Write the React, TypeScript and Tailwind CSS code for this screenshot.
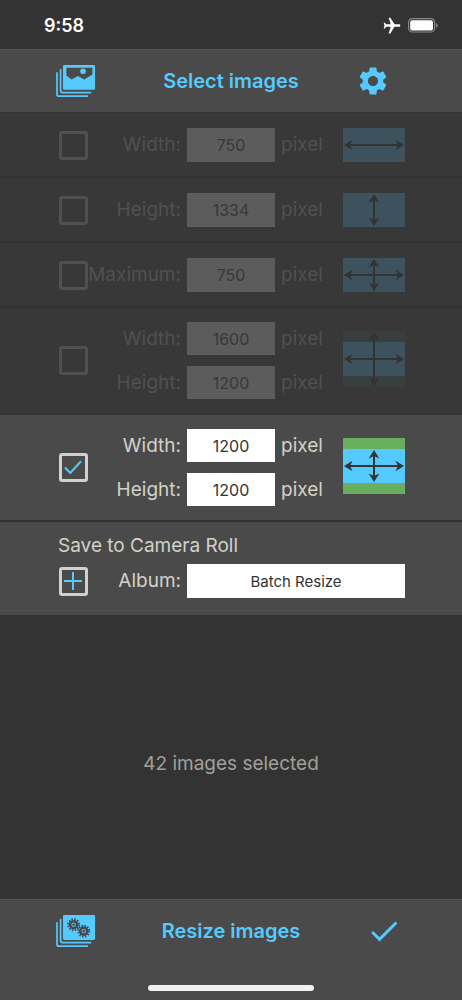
import { useState } from "react";
import type { ReactNode } from "react";
import { MdCheck, MdFlight, MdSettings } from "react-icons/md";

type ArrowKind = "width" | "height" | "maximum" | "fit" | "pad";

type SizeOption = {
  id: ArrowKind;
  fields: { label: string; value: string }[];
};

const OPTIONS: SizeOption[] = [
  { id: "width", fields: [{ label: "Width:", value: "750" }] },
  { id: "height", fields: [{ label: "Height:", value: "1334" }] },
  { id: "maximum", fields: [{ label: "Maximum:", value: "750" }] },
  {
    id: "fit",
    fields: [
      { label: "Width:", value: "1600" },
      { label: "Height:", value: "1200" },
    ],
  },
  {
    id: "pad",
    fields: [
      { label: "Width:", value: "1200" },
      { label: "Height:", value: "1200" },
    ],
  },
];

function StackIcon({ children }: { children: ReactNode }) {
  return (
    <svg width="40" height="33" viewBox="0 0 40 33" fill="none" aria-hidden="true">
      <path d="M1 7.2V29.2Q1 31.2 3 31.2H32" stroke="#55caff" strokeWidth="1.7" />
      <path d="M4.6 4V25.6Q4.6 27.6 6.6 27.6H35.2" stroke="#55caff" strokeWidth="1.7" />
      {children}
    </svg>
  );
}

function PicturesIcon() {
  return (
    <StackIcon>
      <path
        fillRule="evenodd"
        fill="#55caff"
        d="M8.4 0H37.7Q39.1 0 39.1 1.4V23.4Q39.1 24.8 37.7 24.8H8.4Q7 24.8 7 23.4V1.4Q7 0 8.4 0ZM10.4 2.8V10.4L15.6 14.6L21.8 11L28.3 14.6L36.4 9.4V2.8Z"
      />
      <circle cx="27" cy="6.3" r="2.8" fill="#55caff" />
    </StackIcon>
  );
}

function Cog({ cx, cy }: { cx: number; cy: number }) {
  return (
    <g>
      <circle cx={cx} cy={cy} r="5.5" stroke="#484848" strokeWidth="2" strokeDasharray="1.44 1.44" />
      <circle cx={cx} cy={cy} r="3.5" stroke="#484848" strokeWidth="2.6" />
      <circle cx={cx} cy={cy} r="1.3" fill="#484848" />
    </g>
  );
}

function ProcessIcon() {
  return (
    <StackIcon>
      <rect x="7" y="0" width="32.1" height="25" rx="1.4" fill="#55caff" />
      <Cog cx={17.6} cy={9.7} />
      <Cog cx={27.7} cy={16.1} />
    </StackIcon>
  );
}

function HorizontalArrow({ cy }: { cy: number }) {
  return (
    <g fill="#333333">
      <rect x="7" y={cy - 1} width="48" height="2" />
      <g transform={`translate(0 ${cy})`}>
        <path d="M1 0L9.5 -5.3L7 0L9.5 5.3Z" />
        <path d="M61 0L52.5 -5.3L55 0L52.5 5.3Z" />
      </g>
    </g>
  );
}

function VerticalArrow({ top, bottom }: { top: number; bottom: number }) {
  return (
    <g fill="#333333">
      <rect x="30" y={top + 6} width="2" height={bottom - top - 12} />
      <path d={`M31 ${top}L25.7 ${top + 8.5}L31 ${top + 6}L36.3 ${top + 8.5}Z`} />
      <path d={`M31 ${bottom}L25.7 ${bottom - 8.5}L31 ${bottom - 6}L36.3 ${bottom - 8.5}Z`} />
    </g>
  );
}

function ArrowIcon({ kind, active }: { kind: ArrowKind; active: boolean }) {
  const tall = kind === "fit" || kind === "pad";
  const height = tall ? 56 : 34;
  const middle = height / 2;
  const blue = active ? "#55caff" : "#3c525d";
  const bandActive = kind === "pad" ? "#69ad5e" : "#4d6f80";
  const bandIdle = kind === "pad" ? "#404d3f" : "#393e41";
  return (
    <svg
      className={tall ? "mb-1" : ""}
      width="62"
      height={height}
      viewBox={`0 0 62 ${height}`}
      aria-hidden="true"
    >
      {tall && <rect width="62" height="56" fill={active ? bandActive : bandIdle} />}
      <rect y={tall ? 11 : 0} width="62" height="34" fill={blue} />
      {kind !== "height" && <HorizontalArrow cy={middle} />}
      {kind === "fit" && <VerticalArrow top={1} bottom={55} />}
      {(kind === "height" || kind === "maximum") && <VerticalArrow top={1} bottom={33} />}
      {kind === "pad" && <VerticalArrow top={12} bottom={44} />}
    </svg>
  );
}

function OptionRow({
  option,
  active,
  onSelect,
}: {
  option: SizeOption;
  active: boolean;
  onSelect: () => void;
}) {
  const double = option.fields.length > 1;
  return (
    <div
      className={`grid grid-cols-[30px_minmax(0,1fr)_62px] items-center gap-x-1.5 border-b-2 border-[#333] pr-[57px] pb-3.5 pl-[58px] ${
        double ? "pt-3.5" : "pt-[15px]"
      } ${active ? "bg-[#4a4a4a] text-[#d2d2c8]" : "bg-[#383838] text-[#505050]"}`}
    >
      <div className="grid place-items-center">
        <input
          type="checkbox"
          aria-label={`Resize by ${option.id}`}
          checked={active}
          onChange={onSelect}
          className={`col-start-1 row-start-1 size-[29px] appearance-none rounded-[3px] border-3 ${
            active ? "border-[#d0d0d0]" : "border-[#505050]"
          }`}
        />
        {active && (
          <svg
            className="pointer-events-none col-start-1 row-start-1"
            width="18"
            height="16"
            viewBox="0 0 18 16"
            fill="none"
            aria-hidden="true"
          >
            <path d="M1 7.5L6.2 13L17 1.3" stroke="#55caff" strokeWidth="2" />
          </svg>
        )}
      </div>
      <div className={`flex flex-col ${double ? "gap-[11px]" : ""}`}>
        {option.fields.map((field) => {
          const id = `${option.id}-${field.label}`;
          return (
            <div
              key={id}
              className="grid grid-cols-[minmax(0,1fr)_88px_56px] items-center gap-x-1.5 text-[19px] leading-6"
            >
              <label htmlFor={id} className="flex justify-end whitespace-nowrap">
                {field.label}
              </label>
              <input
                id={id}
                type="text"
                inputMode="numeric"
                defaultValue={field.value}
                className={`w-full text-center text-base leading-6 ${double ? "h-[33px]" : "h-[34px]"} ${
                  active ? "bg-white text-[#333]" : "bg-[#5c5c5c] text-[#383838]"
                }`}
              />
              <span>pixel</span>
            </div>
          );
        })}
      </div>
      <ArrowIcon kind={option.id} active={active} />
    </div>
  );
}

export default function App() {
  const [selected, setSelected] = useState<ArrowKind>("pad");

  return (
    <div className="flex min-h-screen flex-col bg-[#333] font-['Inter','Liberation_Sans',sans-serif] text-[#d2d2c8]">
      <div className="flex h-[49px] items-center justify-between pt-0.5 pr-6 pl-11 text-white">
        <span className="text-lg leading-6 font-semibold">9:58</span>
        <div className="flex items-center gap-1.5">
          <MdFlight size={20} className="rotate-90" aria-label="Airplane mode" />
          <svg width="30" height="15" viewBox="0 0 30 15" fill="none" aria-label="Battery full">
            <rect x="0.6" y="0.6" width="26" height="13.4" rx="3.6" stroke="#8a8a8a" strokeWidth="1.2" />
            <rect x="2.2" y="2.2" width="22.8" height="10.2" rx="2" fill="#fff" />
            <path d="M28 5V9.6Q29.7 8.9 29.7 7.3Q29.7 5.7 28 5Z" fill="#8a8a8a" />
          </svg>
        </div>
      </div>

      <header className="grid h-[63px] grid-cols-[1fr_auto_1fr] items-center border-t border-[#555] bg-[#4a4a4a] px-14 text-[#55caff]">
        <button type="button" aria-label="Choose pictures" className="justify-self-start">
          <PicturesIcon />
        </button>
        <button type="button" className="text-xl leading-6 font-semibold">
          Select images
        </button>
        <button type="button" aria-label="Settings" className="justify-self-end pr-4">
          <MdSettings size={34} />
        </button>
      </header>

      <main className="flex flex-1 flex-col">
        <div className="border-t border-[#333]">
          {OPTIONS.map((option) => (
            <OptionRow
              key={option.id}
              option={option}
              active={option.id === selected}
              onSelect={() => setSelected(option.id)}
            />
          ))}
        </div>

        <section className="flex flex-col gap-1.5 bg-[#4a4a4a] pt-3 pr-[57px] pb-[17px] pl-[58px] text-[19px] leading-6">
          <h2>Save to Camera Roll</h2>
          <div className="grid grid-cols-[30px_minmax(0,1fr)_218px] items-center gap-x-1.5">
            <button
              type="button"
              aria-label="Add album"
              className="grid size-[29px] place-items-center justify-self-center rounded-[3px] border-3 border-[#d0d0d0]"
            >
              <svg width="18" height="18" viewBox="0 0 18 18" aria-hidden="true">
                <path d="M9 0V18M0 9H18" stroke="#55caff" strokeWidth="2" />
              </svg>
            </button>
            <label htmlFor="album" className="text-right">
              Album:
            </label>
            <input
              id="album"
              type="text"
              defaultValue="Batch Resize"
              className="h-[34px] w-full bg-white text-center text-[15px] leading-6 text-[#333]"
            />
          </div>
        </section>

        <p className="flex flex-1 items-center justify-center pt-3.5 text-[19px] leading-6 text-[#a0a09a]">
          42 images selected
        </p>
      </main>

      <footer className="border-t border-[#555] bg-[#4a4a4a] text-[#55caff]">
        <div className="grid h-[62px] grid-cols-[1fr_auto_1fr] items-center px-14">
          <button type="button" aria-label="Process pictures" className="justify-self-start">
            <ProcessIcon />
          </button>
          <button type="button" className="text-xl leading-6 font-semibold">
            Resize images
          </button>
          <button type="button" aria-label="Confirm" className="justify-self-end pr-1">
            <MdCheck size={36} />
          </button>
        </div>
        <div className="flex justify-center pt-[23px] pb-[9px]">
          <div className="h-1.5 w-[166px] rounded-full bg-[#f0f0f0]" />
        </div>
      </footer>
    </div>
  );
}
